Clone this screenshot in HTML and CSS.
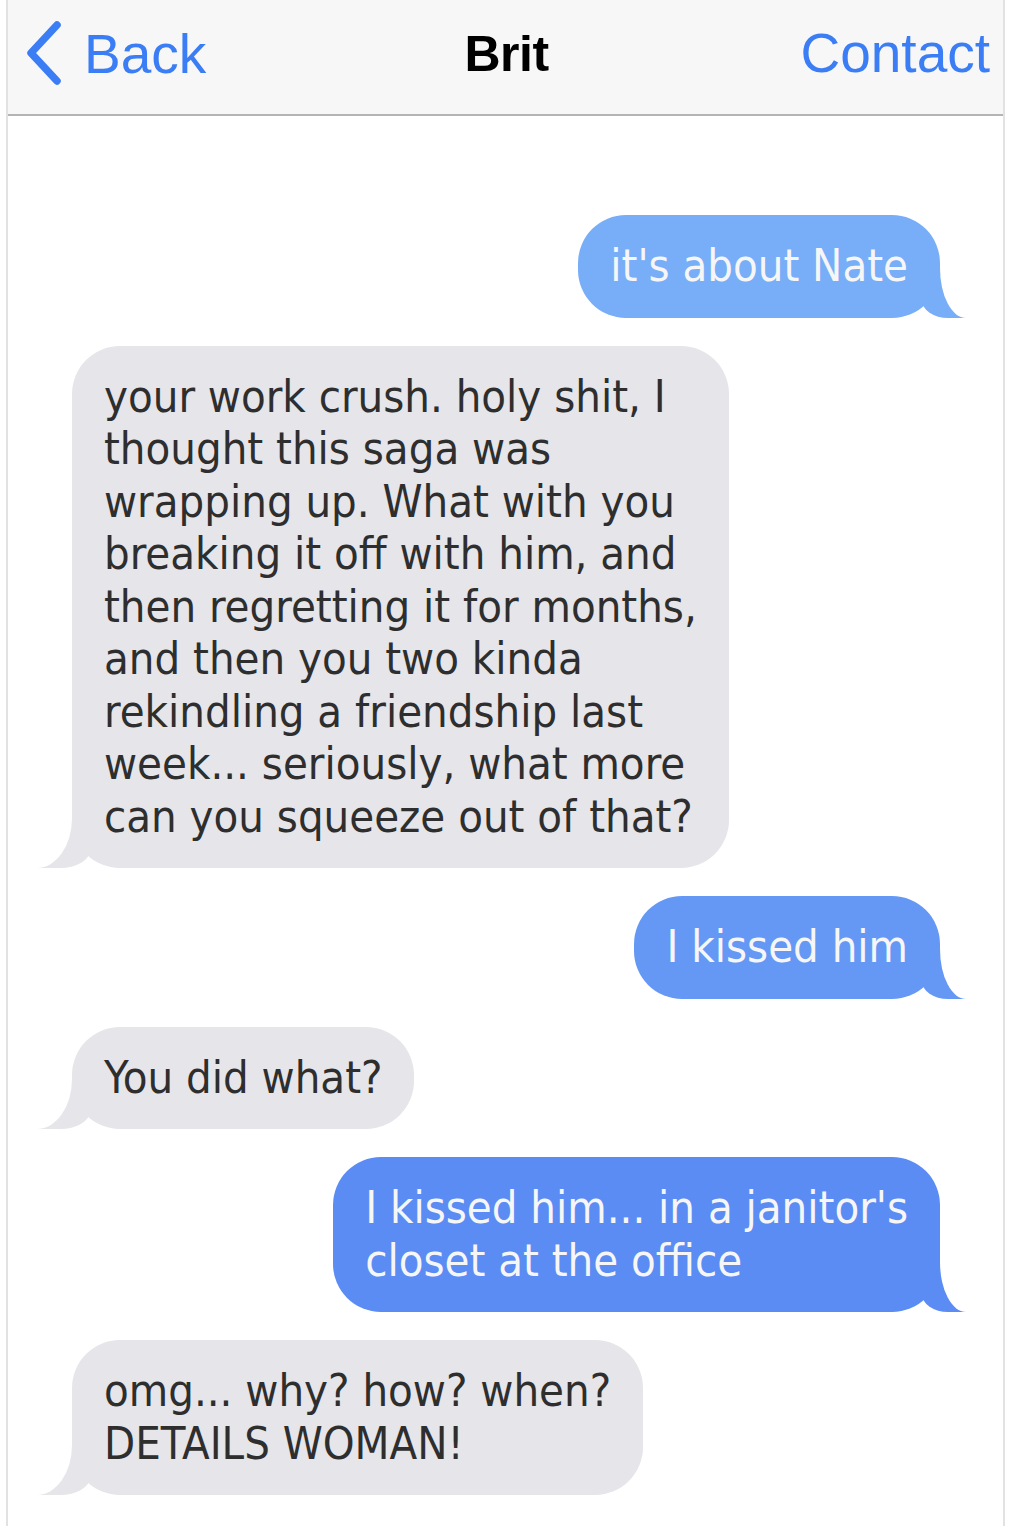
FILE: index.html
```html
<!DOCTYPE html>
<html lang="en">
<head>
    <meta charset="UTF-8">
    <meta name="viewport" content="width=device-width, initial-scale=1.0">
    <title>Brit</title>
    <link rel="stylesheet" href="styles.css">
</head>
<body>
    <div class="phone">
        <div class="header">
            <a class="nav back" href="#">
                <svg class="chevron" width="40" height="64" viewBox="0 0 40 64">
                    <path d="M34 4 L8 32 L34 60" fill="none" stroke="#3b7df4" stroke-width="7.5" stroke-linecap="round" stroke-linejoin="round"/>
                </svg>
                <span>Back</span>
            </a>
            <div class="title">Brit</div>
            <a class="nav contact" href="#">Contact</a>
        </div>

        <div class="thread">
            <div class="bubble sent shade-1">it's about Nate</div>
            <div class="bubble received">your work crush. holy shit, I<br>thought this saga was<br>wrapping up. What with you<br>breaking it off with him, and<br>then regretting it for months,<br>and then you two kinda<br>rekindling a friendship last<br>week... seriously, what more<br>can you squeeze out of that?</div>
            <div class="bubble sent shade-2">I kissed him</div>
            <div class="bubble received">You did what?</div>
            <div class="bubble sent shade-3">I kissed him... in a janitor's<br>closet at the office</div>
            <div class="bubble received">omg... why? how? when?<br>DETAILS WOMAN!</div>
        </div>
    </div>
</body>
</html>
```

FILE: styles.css
```css
body {
    margin: 0;
    background: #fff;
    font-family: "Liberation Sans", Arial, sans-serif;
}
.phone {
    margin: 0 8px 0 6px;
    min-height: 1526px;
    border-left: 2px solid #e2e2e2;
    border-right: 2px solid #e2e2e2;
    box-sizing: border-box;
}
.header {
    display: grid;
    grid-template-columns: 1fr auto 1fr;
    align-items: center;
    height: 106px;
    padding: 0 13px 8px 15px;
    background: #f7f7f7;
    border-bottom: 2px solid #b4b4b4;
}
.nav {
    color: #3b7df4;
    text-decoration: none;
    font-size: 55px;
    line-height: 1;
}
.back {
    display: flex;
    align-items: center;
    gap: 21px;
}
.back span {
    margin-top: 2px;
}
.chevron {
    display: block;
}
.contact {
    justify-self: end;
}
.title {
    font-size: 50px;
    font-weight: bold;
    color: #000;
    letter-spacing: -0.5px;
    margin-top: 2px;
}
.thread {
    display: flex;
    flex-direction: column;
    gap: 28px;
    padding: 99px 63px 40px 64px;
}
.bubble {
    position: relative;
    padding: 25px 32px;
    border-radius: 48px;
    font-family: "DejaVu Sans Condensed", "DejaVu Sans", sans-serif;
    font-size: 45px;
    line-height: 52.5px;
    white-space: nowrap;
}
.bubble::before,
.bubble::after {
    content: "";
    position: absolute;
    bottom: 0;
    height: 50px;
}
.sent {
    align-self: flex-end;
    color: #f6f6f6;
}
.sent::before {
    right: -26px;
    width: 44px;
    background: inherit;
    border-bottom-left-radius: 26px 18px;
}
.sent::after {
    right: -46px;
    width: 46px;
    background: #fff;
    border-bottom-left-radius: 26px 50px;
}
.received {
    align-self: flex-start;
    background: #e5e5ea;
    color: #2e2e2e;
}
.received::before {
    left: -35px;
    width: 53px;
    background: inherit;
    border-bottom-right-radius: 30px 18px;
}
.received::after {
    left: -60px;
    width: 60px;
    background: #fff;
    border-bottom-right-radius: 35px 50px;
}
.shade-1 {
    background: #77aef7;
}
.shade-2 {
    background: #6598f5;
}
.shade-3 {
    background: #5b8cf3;
}
```
